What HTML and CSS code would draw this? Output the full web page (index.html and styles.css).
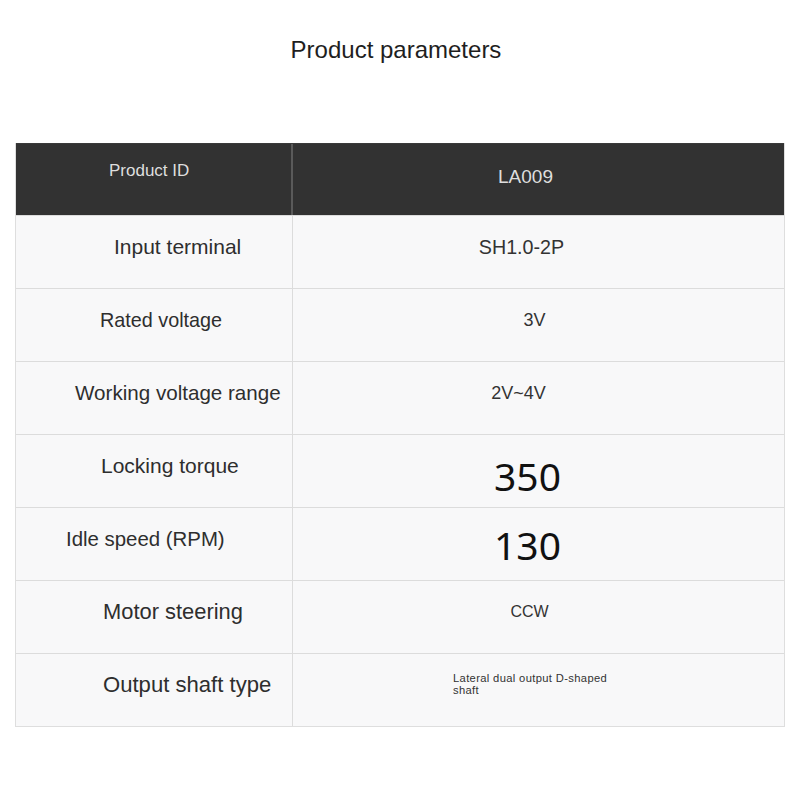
FILE: index.html
```html
<!DOCTYPE html>
<html>
<head>
<meta charset="utf-8">
<link rel="stylesheet" href="styles.css">
</head>
<body>
<div class="page">
  <h1 class="title">Product parameters</h1>
  <div class="table">
    <div class="row head">
      <div class="cell label l-pid">Product ID</div>
      <div class="cell value">LA009</div>
    </div>
    <div class="row">
      <div class="cell label l-input">Input terminal</div>
      <div class="cell value v-sh">SH1.0-2P</div>
    </div>
    <div class="row">
      <div class="cell label l-rated">Rated voltage</div>
      <div class="cell value v-3v">3V</div>
    </div>
    <div class="row">
      <div class="cell label l-work">Working voltage range</div>
      <div class="cell value v-range">2V~4V</div>
    </div>
    <div class="row">
      <div class="cell label l-lock">Locking torque</div>
      <div class="cell value big v-350">350</div>
    </div>
    <div class="row">
      <div class="cell label l-idle">Idle speed (RPM)</div>
      <div class="cell value big v-130">130</div>
    </div>
    <div class="row">
      <div class="cell label l-motor">Motor steering</div>
      <div class="cell value v-ccw">CCW</div>
    </div>
    <div class="row">
      <div class="cell label l-shaft">Output shaft type</div>
      <div class="cell value v-small">Lateral dual output D-shaped<br>shaft</div>
    </div>
  </div>
</div>
</body>
</html>
```

FILE: styles.css
```css
* { box-sizing: border-box; }
html, body { margin: 0; padding: 0; background: #ffffff; }
body { font-family: "Liberation Sans", Arial, sans-serif; color: #333; }

.page { width: 800px; height: 800px; padding-top: 36px; }

.title {
  margin: 0;
  font-size: 24px;
  font-weight: normal;
  color: #1e1e1e;
  text-align: center;
  line-height: 28px;
  height: 107px;
  padding-right: 8px;
}

.table {
  margin-left: 15px;
  width: 770px;
  border: 1px solid #dedede;
  border-top: none;
  background: #f8f8f9;
}

.row {
  display: grid;
  grid-template-columns: 277px 1fr;
  height: 73px;
  border-top: 1.5px solid #dcdcdc;
}

.cell {
  display: flex;
  align-items: center;
  padding-bottom: 10px;
}

.label {
  border-right: 1.5px solid #dcdcdc;
  font-size: 20.6px;
  color: #2e2e2e;
}

.value {
  justify-content: center;
  padding-right: 26px;
  font-size: 18px;
  color: #333;
}

.head { height: 72px; background: #323232; border-top: 1px solid #3a3a3a; }
.head .cell { color: #dedede; }
.head .label { border-right: 2px solid #5a5a5a; font-size: 17px; padding-bottom: 17px; }
.head .value { font-size: 19px; padding-bottom: 5px; }

.l-pid { padding-left: 93px; }
.l-input { padding-left: 98px; font-size: 21px; }
.l-rated { padding-left: 84px; font-size: 19.8px; }
.l-work { padding-left: 59px; font-size: 20.6px; }
.l-lock { padding-left: 85px; font-size: 21px; }
.l-idle { padding-left: 50px; font-size: 20.4px; }
.l-motor { padding-left: 87px; font-size: 21.9px; }
.l-shaft { padding-left: 87px; font-size: 22.1px; }

.v-sh { font-size: 19.7px; padding-right: 34px; }
.v-3v { padding-right: 8px; }
.v-range { padding-right: 40px; }
.v-ccw { font-size: 16px; padding-right: 18px; }

.big {
  font-family: "Noto Sans", sans-serif;
  font-size: 39px;
  color: #111;
}
.v-350 { padding-bottom: 0; padding-top: 8px; padding-right: 22px; }
.v-130 { padding-bottom: 0; padding-top: 0; padding-right: 22px; }

.v-small {
  justify-content: flex-start;
  padding-left: 160px;
  padding-right: 0;
  font-size: 11.2px;
  line-height: 12.5px;
  padding-bottom: 12px;
  letter-spacing: 0.35px;
}
```
